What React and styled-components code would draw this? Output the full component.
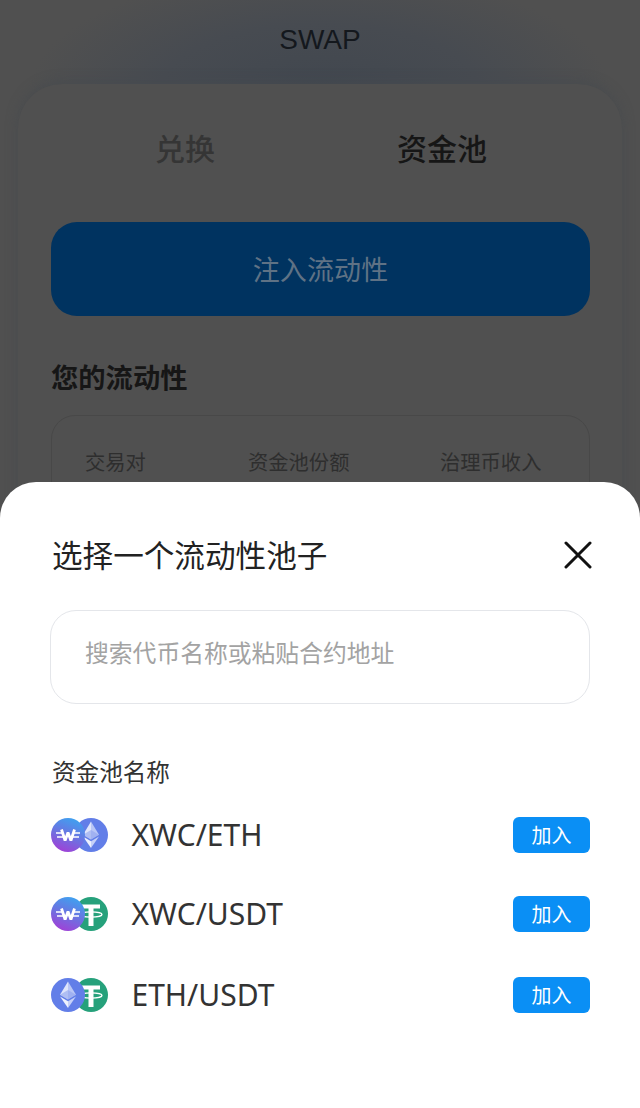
import React from 'react'
import styled, { createGlobalStyle } from 'styled-components'

const GlobalStyle = createGlobalStyle`
  html, body {
    margin: 0;
    padding: 0;
    background: #505050;
  }
  * {
    box-sizing: border-box;
  }
`

const Page = styled.div`
  position: relative;
  width: 640px;
  height: 1108px;
  overflow: hidden;
  background: radial-gradient(ellipse 290px 120px at 320px 90px, #41474f 0%, #474b51 55%, #505050 100%);
  font-family: "Noto Sans CJK SC", "Noto Sans", sans-serif;
`

const Header = styled.header`
  height: 84px;
  padding-top: 22px;
  text-align: center;
  font-family: "Liberation Sans", sans-serif;
  font-size: 28px;
  line-height: 36px;
  color: #14181d;
`

const Card = styled.section`
  height: 1000px;
  margin: 0 18px;
  padding: 0 32px;
  background: #505050;
  border-radius: 44px 44px 0 0;
  box-shadow: 0 -2px 12px rgba(70, 74, 78, 0.7);
`

const Tabs = styled.div`
  display: flex;
  height: 138px;
  padding-top: 39px;
`

const Tab = styled.div`
  width: ${p => p.$w}px;
  text-align: center;
  font-size: 30px;
  line-height: 48px;
  font-weight: 500;
  color: ${p => (p.$active ? '#161616' : '#353535')};
`

const InjectButton = styled.div`
  height: 94px;
  margin-left: 1px;
  border-radius: 26px;
  background: #003360;
  color: #5f7285;
  font-size: 27px;
  line-height: 94px;
  text-align: center;
  letter-spacing: 0.1px;
`

const SectionTitle = styled.h2`
  margin: 40px 0 19px 1px;
  font-size: 27.3px;
  line-height: 40px;
  font-weight: 700;
  color: #161616;
`

const PositionBox = styled.div`
  display: grid;
  grid-template-columns: 163px 192px auto;
  height: 120px;
  margin-left: 1px;
  padding: 29px 0 0 33px;
  border: 1px solid #484848;
  border-radius: 24px;
`

const PositionLabel = styled.span`
  font-size: 20.3px;
  line-height: 32px;
  white-space: nowrap;
  color: #2e2e2e;
`

const Sheet = styled.div`
  position: absolute;
  left: 0;
  right: 0;
  top: 482px;
  bottom: 0;
  padding: 52px 50px 0 51px;
  background: #fff;
  border-radius: 36px 36px 0 0;
`

const SheetHead = styled.div`
  display: flex;
  align-items: center;
  justify-content: space-between;
  height: 42px;
`

const SheetTitle = styled.h1`
  margin: -2px 0 0 1px;
  font-size: 30.6px;
  line-height: 42px;
  font-weight: 400;
  color: #222;
`

const CloseButton = styled.svg`
  display: block;
  width: 28px;
  height: 28px;
  margin-right: -2px;
`

const SearchBox = styled.div`
  height: 94px;
  margin: 34px 0 0 -1px;
  padding: 23px 34px 0;
  border: 1px solid #e4e6ea;
  border-radius: 26px;
  font-size: 23.8px;
  line-height: 36px;
  color: #a3a3a3;
`

const ListLabel = styled.div`
  margin: 50px 0 0 1px;
  font-size: 23.6px;
  line-height: 34px;
  color: #333;
`

const PoolList = styled.div`
  display: flex;
  flex-direction: column;
  margin-top: 7px;
`

const PoolRow = styled.div`
  display: flex;
  align-items: center;
  height: ${p => p.$h}px;
`

const PairIcon = styled.svg`
  display: block;
  flex: none;
  width: 58px;
  height: 36px;
`

const PoolName = styled.span`
  flex: 1;
  margin-left: 22.500px;
  font-family: "Noto Sans", sans-serif;
  font-size: 30px;
  line-height: 40px;
  color: #333;
`

const JoinButton = styled.div`
  width: 77px;
  height: 36px;
  border-radius: 6px;
  background: #0a8ff5;
  color: #fff;
  font-size: 20px;
  line-height: 35px;
  text-align: center;
`

const WCoin = ({ id, x }) => (
  <g transform={`translate(${x} 0)`}>
    <defs>
      <linearGradient id={id} x1="0.7" y1="0" x2="0.3" y2="1">
        <stop offset="0" stopColor="#3da3f0" />
        <stop offset="0.55" stopColor="#6f6fe0" />
        <stop offset="1" stopColor="#a23fd6" />
      </linearGradient>
    </defs>
    <circle cx="17" cy="18" r="17" fill={`url(#${id})`} />
    <path d="M10.500 12.500l3.600 11 2.900-8 2.900 8 3.600-11" fill="none" stroke="#fff" strokeWidth="2.800" strokeLinejoin="bevel" />
    <path d="M5 16h6.500M22.500 16h6.500M6 20h6.500M21.500 20h6.500" stroke="#fff" strokeWidth="1.700" />
  </g>
)

const EthCoin = ({ x }) => (
  <g transform={`translate(${x} 0)`}>
    <circle cx="17" cy="18" r="17" fill="#627ee8" />
    <path d="M17 4.500l-8 13.300 8 4.700z" fill="#dfe5fb" />
    <path d="M17 4.500l8 13.300-8 4.700z" fill="#b9c6f6" />
    <path d="M9 19.600l8 11.400v-6.700z" fill="#eef1fd" />
    <path d="M25 19.600l-8 11.400v-6.700z" fill="#c6d1f8" />
    <path d="M17 13l-8 4.800 8 4.700 8-4.700z" fill="#8fa3ef" fillOpacity="0.6" />
  </g>
)

const UsdtCoin = ({ x }) => (
  <g transform={`translate(${x} 0)`}>
    <circle cx="17" cy="18" r="17" fill="#26a17b" />
    <path d="M8 8.500h18v4h-6.500V30h-5V12.500H8z" fill="#fff" />
    <ellipse cx="17" cy="18.500" rx="11" ry="2.600" fill="none" stroke="#fff" strokeWidth="1.300" />
  </g>
)

const COINS = {
  XWC: (key, x) => <WCoin key={key} id={`w-${key}`} x={x} />,
  ETH: (key, x) => <EthCoin key={key} x={x} />,
  USDT: (key, x) => <UsdtCoin key={key} x={x} />,
}

const pools = [
  { a: 'XWC', b: 'ETH', h: 80 },
  { a: 'XWC', b: 'USDT', h: 78 },
  { a: 'ETH', b: 'USDT', h: 84 },
]

const PoolItem = ({ a, b, h }) => (
  <PoolRow $h={h}>
    <PairIcon viewBox="0 0 58 36">
      {COINS[b](`${a}${b}b`, 23)}
      {COINS[a](`${a}${b}a`, 0)}
    </PairIcon>
    <PoolName>{a}/{b}</PoolName>
    <JoinButton>加入</JoinButton>
  </PoolRow>
)

const App = () => (
  <Page>
    <GlobalStyle />
    <Header>SWAP</Header>
    <Card>
      <Tabs>
        <Tab $w={270}>兑换</Tab>
        <Tab $w={244} $active>资金池</Tab>
      </Tabs>
      <InjectButton>注入流动性</InjectButton>
      <SectionTitle>您的流动性</SectionTitle>
      <PositionBox>
        <PositionLabel>交易对</PositionLabel>
        <PositionLabel>资金池份额</PositionLabel>
        <PositionLabel>治理币收入</PositionLabel>
      </PositionBox>
    </Card>
    <Sheet>
      <SheetHead>
        <SheetTitle>选择一个流动性池子</SheetTitle>
        <CloseButton viewBox="0 0 28 28">
          <path d="M2 2l24 24M26 2L2 26" fill="none" stroke="#111" strokeWidth="3" strokeLinecap="round" />
        </CloseButton>
      </SheetHead>
      <SearchBox>搜索代币名称或粘贴合约地址</SearchBox>
      <ListLabel>资金池名称</ListLabel>
      <PoolList>
        {pools.map(p => <PoolItem key={p.a + p.b} {...p} />)}
      </PoolList>
    </Sheet>
  </Page>
)

export default App
